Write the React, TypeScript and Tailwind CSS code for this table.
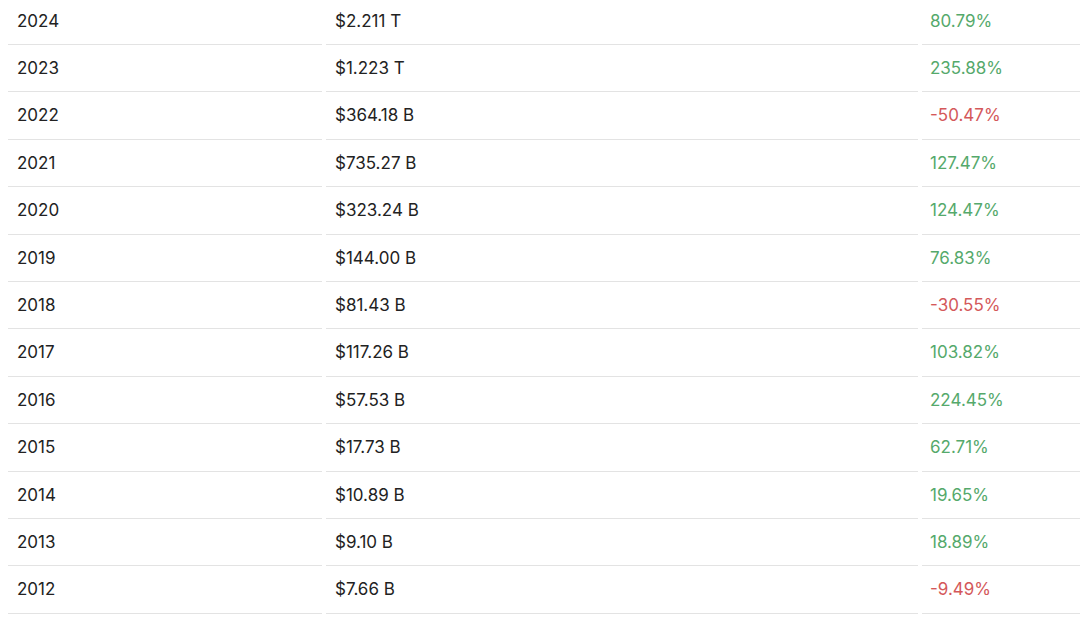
const rows = [
  { year: '2024', value: '$2.211 T', change: '80.79%' },
  { year: '2023', value: '$1.223 T', change: '235.88%' },
  { year: '2022', value: '$364.18 B', change: '-50.47%' },
  { year: '2021', value: '$735.27 B', change: '127.47%' },
  { year: '2020', value: '$323.24 B', change: '124.47%' },
  { year: '2019', value: '$144.00 B', change: '76.83%' },
  { year: '2018', value: '$81.43 B', change: '-30.55%' },
  { year: '2017', value: '$117.26 B', change: '103.82%' },
  { year: '2016', value: '$57.53 B', change: '224.45%' },
  { year: '2015', value: '$17.73 B', change: '62.71%' },
  { year: '2014', value: '$10.89 B', change: '19.65%' },
  { year: '2013', value: '$9.10 B', change: '18.89%' },
  { year: '2012', value: '$7.66 B', change: '-9.49%' },
];

export default function App() {
  return (
    <div className="w-[1080px] h-[619px] overflow-hidden bg-white">
      <div
        className="-mt-[2.4px] pl-2 flex flex-col text-[17px] text-[#222]"
        style={{ fontFamily: 'Inter, "Liberation Sans", sans-serif' }}
      >
        {rows.map((r) => {
          const neg = r.change.startsWith('-');
          return (
            <div key={r.year} className="grid grid-cols-[314px_592px_170px] gap-x-1 h-[47.42px]">
              <div className="flex items-center pl-[9px] pt-[1px] border-b border-[#e3e3e3]">{r.year}</div>
              <div className="flex items-center pl-[9px] pt-[1px] border-b border-[#e3e3e3]">{r.value}</div>
              <div
                className={`flex items-center pl-[8px] pt-[1px] border-b border-[#e3e3e3] ${
                  neg ? 'text-[#d4585a]' : 'text-[#55a96b]'
                }`}
              >
                {r.change}
              </div>
            </div>
          );
        })}
      </div>
    </div>
  );
}
